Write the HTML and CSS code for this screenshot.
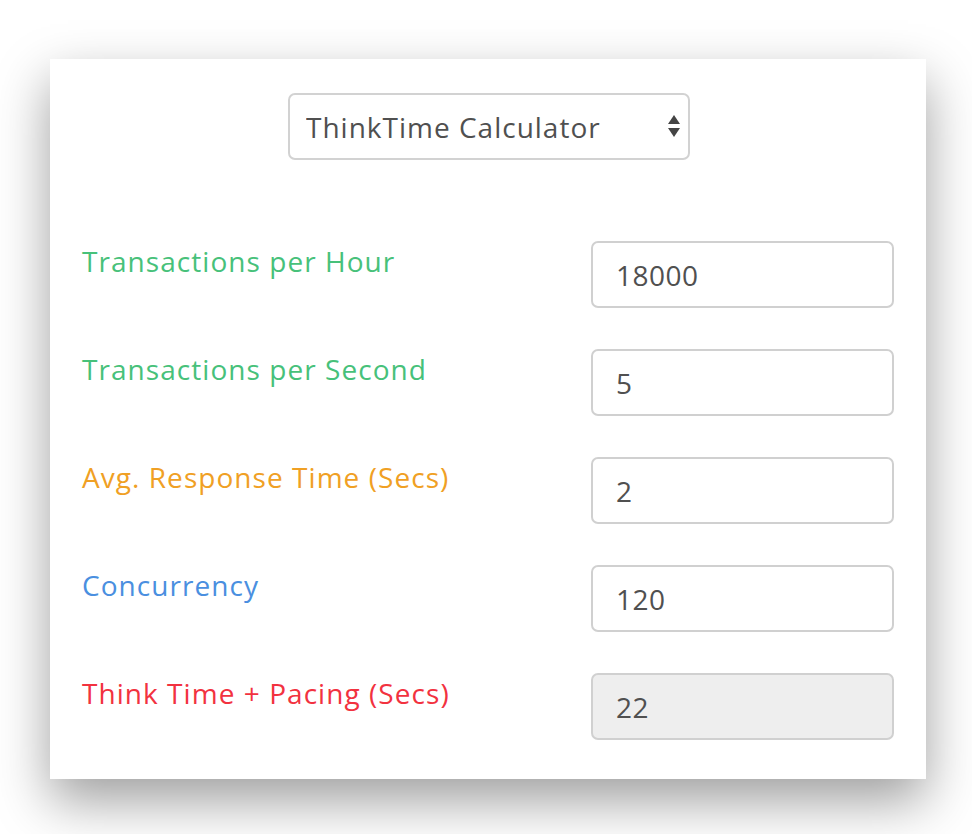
FILE: index.html
```html
<!DOCTYPE html>
<html>

<head>
  <meta charset="utf-8">
  <title>ThinkTime Calculator</title>
  <link rel="stylesheet" href="styles.css">
</head>

<body>
  <div class="calc">
    <div class="calc-head">
      <div class="picker">
        <select class="picker-select">
          <option>ThinkTime Calculator</option>
          <option>TPS Calculator</option>
          <option>Concurrency Calculator</option>
        </select>
        <svg class="picker-arrows" width="12" height="22" viewBox="0 0 12 22">
          <path d="M6 0 L12 9 L0 9 Z" fill="#444" />
          <path d="M0 13 L12 13 L6 22 Z" fill="#444" />
        </svg>
      </div>
    </div>

    <div class="calc-form">
      <div class="row">
        <label class="lbl lbl-green">Transactions per Hour</label>
        <input class="field" type="text" value="18000">
      </div>
      <div class="row">
        <label class="lbl lbl-green">Transactions per Second</label>
        <input class="field" type="text" value="5">
      </div>
      <div class="row">
        <label class="lbl lbl-orange">Avg. Response Time (Secs)</label>
        <input class="field" type="text" value="2">
      </div>
      <div class="row">
        <label class="lbl lbl-blue">Concurrency</label>
        <input class="field" type="text" value="120">
      </div>
      <div class="row">
        <label class="lbl lbl-red">Think Time + Pacing (Secs)</label>
        <input class="field" type="text" value="22" readonly>
      </div>
    </div>
  </div>
</body>

</html>
```

FILE: styles.css
```css
* {
  margin: 0;
  padding: 0;
  box-sizing: border-box;
}

body {
  background: #fff;
  font-family: "Open Sans", "DejaVu Sans", sans-serif;
  padding: 59px 46px 55px 50px;
}

.calc {
  width: 876px;
  height: 720px;
  background: #fff;
  padding: 34px 32px 39px 32px;
  box-shadow: 0 22px 50px rgba(0, 0, 0, .38);
}

.calc-head {
  display: flex;
  justify-content: center;
  padding-left: 2px;
}

.picker {
  position: relative;
  width: 402px;
  height: 67px;
}

.picker-select {
  width: 100%;
  height: 100%;
  -webkit-appearance: none;
  appearance: none;
  border: 2px solid #d2d2d2;
  border-radius: 7px;
  background: #fff;
  padding: 0 0 0 16px;
  font-family: inherit;
  font-size: 28px;
  letter-spacing: 1px;
  color: #505050;
  outline: none;
}

.picker-arrows {
  position: absolute;
  right: 10px;
  top: 22px;
}

.calc-form {
  margin-top: 81px;
  display: flex;
  flex-direction: column;
  gap: 41px;
}

.row {
  display: flex;
  justify-content: space-between;
  align-items: flex-start;
}

.lbl {
  font-size: 28px;
  line-height: 40px;
  letter-spacing: 1.05px;
}

.lbl-green {
  color: #47c17a;
}

.lbl-orange {
  color: #f0a024;
}

.lbl-blue {
  color: #4a8fe0;
}

.lbl-red {
  color: #f2323f;
}

.field {
  width: 303px;
  height: 67px;
  border: 2px solid #d0d0d0;
  border-radius: 7px;
  padding: 0 0 0 23px;
  font-family: inherit;
  font-size: 28px;
  letter-spacing: .5px;
  color: #505050;
  background: #fff;
  outline: none;
}

.field[readonly] {
  background: #eee;
}
```
